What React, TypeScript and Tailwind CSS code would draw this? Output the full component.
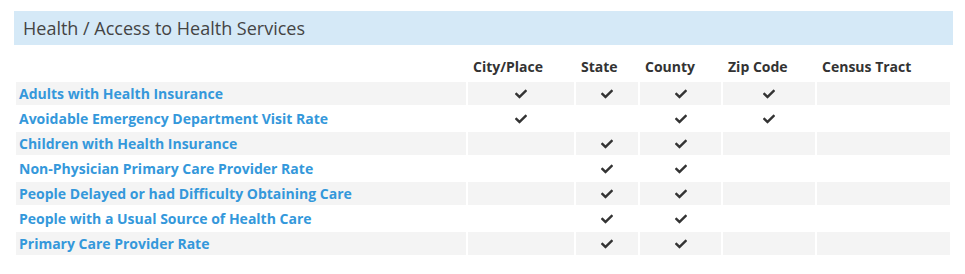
import { FaCheck } from 'react-icons/fa'

const cols = ['City/Place', 'State', 'County', 'Zip Code', 'Census Tract']
const widths = ['w-[106px]', 'w-[62px]', 'w-[81px]', 'w-[92px]', 'w-[133px]']

// [city, state, county, zip, tract]
const rows: { label: string; has: boolean[] }[] = [
  { label: 'Adults with Health Insurance', has: [true, true, true, true, false] },
  { label: 'Avoidable Emergency Department Visit Rate', has: [true, false, true, true, false] },
  { label: 'Children with Health Insurance', has: [false, true, true, false, false] },
  { label: 'Non-Physician Primary Care Provider Rate', has: [false, true, true, false, false] },
  { label: 'People Delayed or had Difficulty Obtaining Care', has: [false, true, true, false, false] },
  { label: 'People with a Usual Source of Health Care', has: [false, true, true, false, false] },
  { label: 'Primary Care Provider Rate', has: [false, true, true, false, false] },
]

export default function App() {
  return (
    <div className="w-[965px] h-[274px] bg-white pt-[11px] pl-[14px] pr-[12px] font-['Open_Sans',sans-serif]">
      <div className="h-[34px] bg-[#d5e9f7] pl-[9px] flex items-center text-[18px] text-[#444] w-[939px]">
        Health / Access to Health Services
      </div>
      <table className="mt-[8px] border-separate border-spacing-[2px] w-[938px] text-[14px] leading-[19px]">
        <thead>
          <tr>
            <th className="w-[450px] h-[25px]"></th>
            {cols.map((c, i) => (
              <th key={c} className={`${widths[i]} h-[25px] text-left pl-[5px] pb-[3px] font-bold text-[#333]`}>
                {c}
              </th>
            ))}
          </tr>
        </thead>
        <tbody>
          {rows.map((r, ri) => {
            const bg = ri % 2 === 0 ? 'bg-[#f4f4f4]' : 'bg-white'
            return (
              <tr key={r.label}>
                <td className={`${bg} h-[23px] p-0 pl-[3px] font-bold text-[#3498db]`}>{r.label}</td>
                {r.has.map((h, ci) => (
                  <td key={ci} className={`${bg} h-[23px] p-0`}>
                    {h && (
                      <div className="flex justify-center">
                        <FaCheck size={12} color="#333" />
                      </div>
                    )}
                  </td>
                ))}
              </tr>
            )
          })}
        </tbody>
      </table>
    </div>
  )
}
